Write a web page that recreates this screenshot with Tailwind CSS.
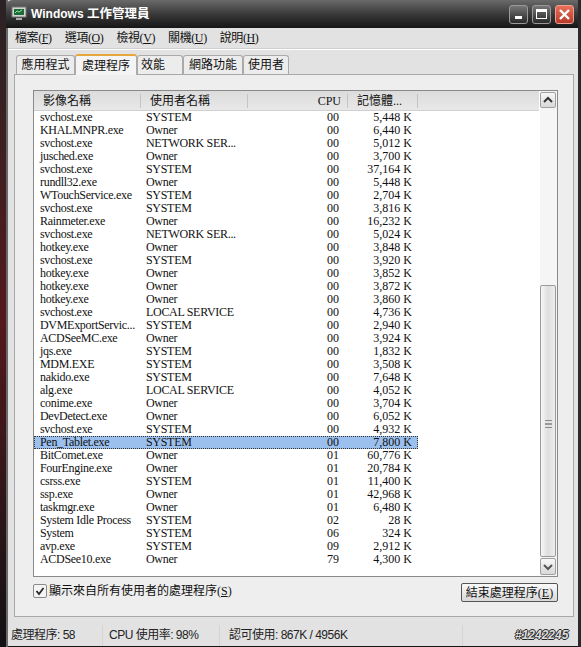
<!DOCTYPE html>
<html lang="zh-Hant">
<head>
<meta charset="UTF-8">
<title>Windows 工作管理員</title>
<script src="https://cdn.jsdelivr.net/npm/@tailwindcss/browser@4"></script>
</head>
<body class="bg-[#1a1416]">
<div class="w-[581px] h-[647px] overflow-hidden flex bg-[#181416] font-['Liberation_Serif','Noto_Sans_CJK_TC',serif] text-[12px] text-[#111]">
    <!-- dark strip left of the window -->
    <div class="w-[6px] h-full bg-gradient-to-b from-[#2a2224] via-[#54181c] to-[#121014]"></div>
    <div class="w-[2px] h-full bg-[#6a6a6a]"></div>

    <div class="w-[570px] h-[646px] flex flex-col bg-[#e2e2e2]">
        <!-- title bar -->
        <div class="h-[28px] flex items-center -ml-[2px] pl-[5px] pr-[4px] bg-gradient-to-b from-[#6a6a6a] via-[#3a3a3a] to-[#161616] shrink-0 rounded-tl-[6px] relative">
            <svg width="16" height="16" viewBox="0 0 16 16" class="mr-[4px]">
                <rect x="1" y="1" width="14" height="10" fill="#cfd6cf" stroke="#777"/>
                <rect x="3" y="3" width="10" height="6" fill="#1c6b3a"/>
                <path d="M4 7l2-2 2 1 3-2" stroke="#8fe08f" fill="none"/>
                <rect x="5" y="12" width="6" height="2" fill="#aaa"/>
            </svg>
            <span class="font-['Liberation_Sans','Noto_Sans_CJK_TC',sans-serif] font-bold text-[12.5px] text-white"><span class="text-[12px]">Windows</span> 工作管理員</span>
            <div class="ml-auto flex gap-[4px]">
                <div class="w-[19px] h-[19px] rounded-[3px] border border-[#999] bg-gradient-to-b from-[#777] to-[#2a2a2a] flex items-end justify-center pb-[4px]">
                    <div class="w-[7px] h-[3px] bg-white"></div>
                </div>
                <div class="w-[19px] h-[19px] rounded-[3px] border border-[#999] bg-gradient-to-b from-[#777] to-[#2a2a2a] flex items-center justify-center">
                    <div class="w-[11px] h-[10px] border border-t-[3px] border-white"></div>
                </div>
                <div class="w-[19px] h-[19px] rounded-[3px] border border-[#e9a090] bg-gradient-to-b from-[#e8705a] to-[#b83a2a] flex items-center justify-center">
                    <svg width="13" height="13" viewBox="0 0 13 13"><path d="M2 2l9 9M11 2l-9 9" stroke="#fff" stroke-width="2.4"/></svg>
                </div>
            </div>
        </div>

        <!-- menu -->
        <div class="h-[21px] flex items-center gap-[13px] pl-[7px] border-b border-[#cfcfcf] shrink-0 tracking-[-0.4px]">
            <span>檔案(<u>F</u>)</span><span>選項(<u>O</u>)</span><span>檢視(<u>V</u>)</span><span>關機(<u>U</u>)</span><span>說明(<u>H</u>)</span>
        </div>
        <div class="h-[1px] bg-white shrink-0"></div>

        <!-- tabs -->
        <div class="h-[24px] pl-[8px] pt-[5px] flex items-end shrink-0 relative z-10">
            <div class="w-[59px] h-[19px] flex items-center justify-center bg-[#ececec] border border-[#aaa] border-b-0 rounded-t-[3px]">應用程式</div>
            <div class="w-[62px] h-[21px] flex items-center justify-center bg-[#f4f4f4] border-x border-[#aaa] border-t-2 border-t-[#e6a83c] rounded-t-[3px] -mb-[1px]">處理程序</div>
            <div class="w-[46px] h-[19px] flex items-center pl-[3px] bg-[#ececec] border border-[#aaa] border-b-0 rounded-t-[3px]">效能</div>
            <div class="w-[60px] h-[19px] flex items-center justify-center bg-[#ececec] border border-[#aaa] border-b-0 rounded-t-[3px]">網路功能</div>
            <div class="w-[46px] h-[19px] flex items-center justify-center bg-[#ececec] border border-[#aaa] border-b-0 rounded-t-[3px]">使用者</div>
        </div>

        <!-- panel -->
        <div class="w-[560px] h-[543px] ml-[6px] shrink-0 border border-[#a8a8a8] bg-[#eeeeee] pt-[15px] pl-[18px] flex flex-col">
            <!-- list view -->
            <div class="w-[525px] h-[487px] border border-[#8a8a8a] bg-white flex shrink-0">
                <div class="w-[506px] h-full flex flex-col">
                    <div class="h-[20px] flex items-center bg-gradient-to-b from-[#dcdcdc] to-[#e8e8e8] border-b border-[#d0d0d0] shrink-0">
                        <div class="w-[107px] h-[14px] flex items-center pl-[9px] border-r border-[#c4c4c4]">影像名稱</div>
                        <div class="w-[107px] h-[14px] flex items-center pl-[9px] border-r border-[#c4c4c4]">使用者名稱</div>
                        <div class="w-[100px] h-[14px] flex items-center justify-end pr-[6px] border-r border-[#c4c4c4]">CPU</div>
                        <div class="w-[70px] h-[14px] flex items-center pl-[9px] border-r border-[#c4c4c4] whitespace-nowrap">記憶體...</div>
                    </div>
                    <div id="rows" class="flex flex-col"></div>
                </div>
                <!-- scrollbar -->
                <div class="w-[17px] ml-[1px] h-full flex flex-col bg-[#f5f5f5] shrink-0 pt-[1px]">
                    <div class="w-[16px] h-[16px] border border-[#a0a0a0] rounded-[2px] bg-gradient-to-b from-[#f8f8f8] to-[#d8d8d8] flex items-center justify-center shrink-0">
                        <svg width="10" height="8" viewBox="0 0 10 8"><path d="M1 6l4-4 4 4" stroke="#333" stroke-width="2" fill="none"/></svg>
                    </div>
                    <div class="h-[177px] shrink-0"></div>
                    <div class="w-[16px] h-[272px] border border-[#9a9a9a] rounded-[2px] bg-gradient-to-r from-[#f6f6f6] via-[#dedede] to-[#ededed] flex items-end justify-center pb-[128px] shrink-0">
                        <div class="w-[7px] h-[8px] border-y border-[#888] flex items-center"><div class="w-full h-[2px] border-y border-[#999]"></div></div>
                    </div>
                    <div class="h-[1px] shrink-0"></div>
                    <div class="w-[16px] h-[17px] border border-[#a0a0a0] rounded-[2px] bg-gradient-to-b from-[#f8f8f8] to-[#d8d8d8] flex items-center justify-center shrink-0">
                        <svg width="10" height="8" viewBox="0 0 10 8"><path d="M1 2l4 4 4-4" stroke="#555" stroke-width="2" fill="none"/></svg>
                    </div>
                </div>
            </div>

            <!-- bottom controls -->
            <div class="flex items-start w-[525px] mt-[6px]">
                <div class="w-[14px] h-[14px] mt-[1px] border border-[#8a8a8a] rounded-[2px] bg-[#f4f4f4] flex items-center justify-center shrink-0">
                    <svg width="10" height="10" viewBox="0 0 10 10"><path d="M1.5 5l2.5 3 4.5-6" stroke="#2a2a2a" stroke-width="1.8" fill="none"/></svg>
                </div>
                <span class="ml-[2px] leading-[16px]">顯示來自所有使用者的處理程序(<u>S</u>)</span>
                <div class="ml-auto w-[97px] h-[19px] border border-[#555] rounded-[2px] bg-gradient-to-b from-[#fafafa] to-[#d8d8d8] flex items-center justify-center">結束處理程序(<u>E</u>)</div>
            </div>
        </div>

        <!-- status bar -->
        <div class="flex-1 flex items-center text-[12px] tracking-[-0.5px] font-['Liberation_Sans','Noto_Sans_CJK_TC',sans-serif] text-[#222] pt-[7px] pl-[3px]">
            <div class="w-[92px] h-[21px] flex items-center border-r border-[#d4d4d4]">處理程序: 58</div>
            <div class="w-[117px] h-[21px] flex items-center pl-[6px] border-r border-[#d4d4d4]">CPU 使用率: 98%</div>
            <div class="w-[243px] h-[21px] flex items-center pl-[9px] border-r border-[#d4d4d4]">認可使用: 867K / 4956K</div>
            <div class="ml-[52px] font-bold italic text-[12px] tracking-normal text-[#dddddd] [text-shadow:1px_0_#222,-1px_0_#222,0_1px_#222,0_-1px_#222]">#1242245</div>
        </div>
    </div>
    <div class="w-[3px] h-full bg-[#2a2a2a]"></div>
</div>

<script>
    // name, user, cpu, memory
    const processes = [
        ['svchost.exe', 'SYSTEM', '00', '5,448'],
        ['KHALMNPR.exe', 'Owner', '00', '6,440'],
        ['svchost.exe', 'NETWORK SER...', '00', '5,012'],
        ['jusched.exe', 'Owner', '00', '3,700'],
        ['svchost.exe', 'SYSTEM', '00', '37,164'],
        ['rundll32.exe', 'Owner', '00', '5,448'],
        ['WTouchService.exe', 'SYSTEM', '00', '2,704'],
        ['svchost.exe', 'SYSTEM', '00', '3,816'],
        ['Rainmeter.exe', 'Owner', '00', '16,232'],
        ['svchost.exe', 'NETWORK SER...', '00', '5,024'],
        ['hotkey.exe', 'Owner', '00', '3,848'],
        ['svchost.exe', 'SYSTEM', '00', '3,920'],
        ['hotkey.exe', 'Owner', '00', '3,852'],
        ['hotkey.exe', 'Owner', '00', '3,872'],
        ['hotkey.exe', 'Owner', '00', '3,860'],
        ['svchost.exe', 'LOCAL SERVICE', '00', '4,736'],
        ['DVMExportServic...', 'SYSTEM', '00', '2,940'],
        ['ACDSeeMC.exe', 'Owner', '00', '3,924'],
        ['jqs.exe', 'SYSTEM', '00', '1,832'],
        ['MDM.EXE', 'SYSTEM', '00', '3,508'],
        ['nakido.exe', 'SYSTEM', '00', '7,648'],
        ['alg.exe', 'LOCAL SERVICE', '00', '4,052'],
        ['conime.exe', 'Owner', '00', '3,704'],
        ['DevDetect.exe', 'Owner', '00', '6,052'],
        ['svchost.exe', 'SYSTEM', '00', '4,932'],
        ['Pen_Tablet.exe', 'SYSTEM', '00', '7,800'],
        ['BitComet.exe', 'Owner', '01', '60,776'],
        ['FourEngine.exe', 'Owner', '01', '20,784'],
        ['csrss.exe', 'SYSTEM', '01', '11,400'],
        ['ssp.exe', 'Owner', '01', '42,968'],
        ['taskmgr.exe', 'Owner', '01', '6,480'],
        ['System Idle Process', 'SYSTEM', '02', '28'],
        ['System', 'SYSTEM', '06', '324'],
        ['avp.exe', 'SYSTEM', '09', '2,912'],
        ['ACDSee10.exe', 'Owner', '79', '4,300']
    ];

    const rows = document.getElementById('rows');
    processes.forEach(([name, user, cpu, mem]) => {
        const selected = name === 'Pen_Tablet.exe';
        const row = document.createElement('div');
        row.className = selected
            ? 'h-[13px] flex items-center leading-[13px] w-[384px] bg-[#9cc0ee] outline-1 outline-dotted outline-[#333] -outline-offset-1'
            : 'h-[13px] flex items-center leading-[13px] w-[384px]';
        row.innerHTML = `
            <div class="w-[107px] pl-[6px] whitespace-nowrap tracking-[-0.3px]">${name}</div>
            <div class="w-[107px] pl-[5px] whitespace-nowrap tracking-[-0.3px]">${user}</div>
            <div class="w-[91px] text-right">${cpu}</div>
            <div class="w-[79px] pr-[6px] text-right">${mem} K</div>
        `;
        rows.appendChild(row);
    });
</script>
</body>
</html>
